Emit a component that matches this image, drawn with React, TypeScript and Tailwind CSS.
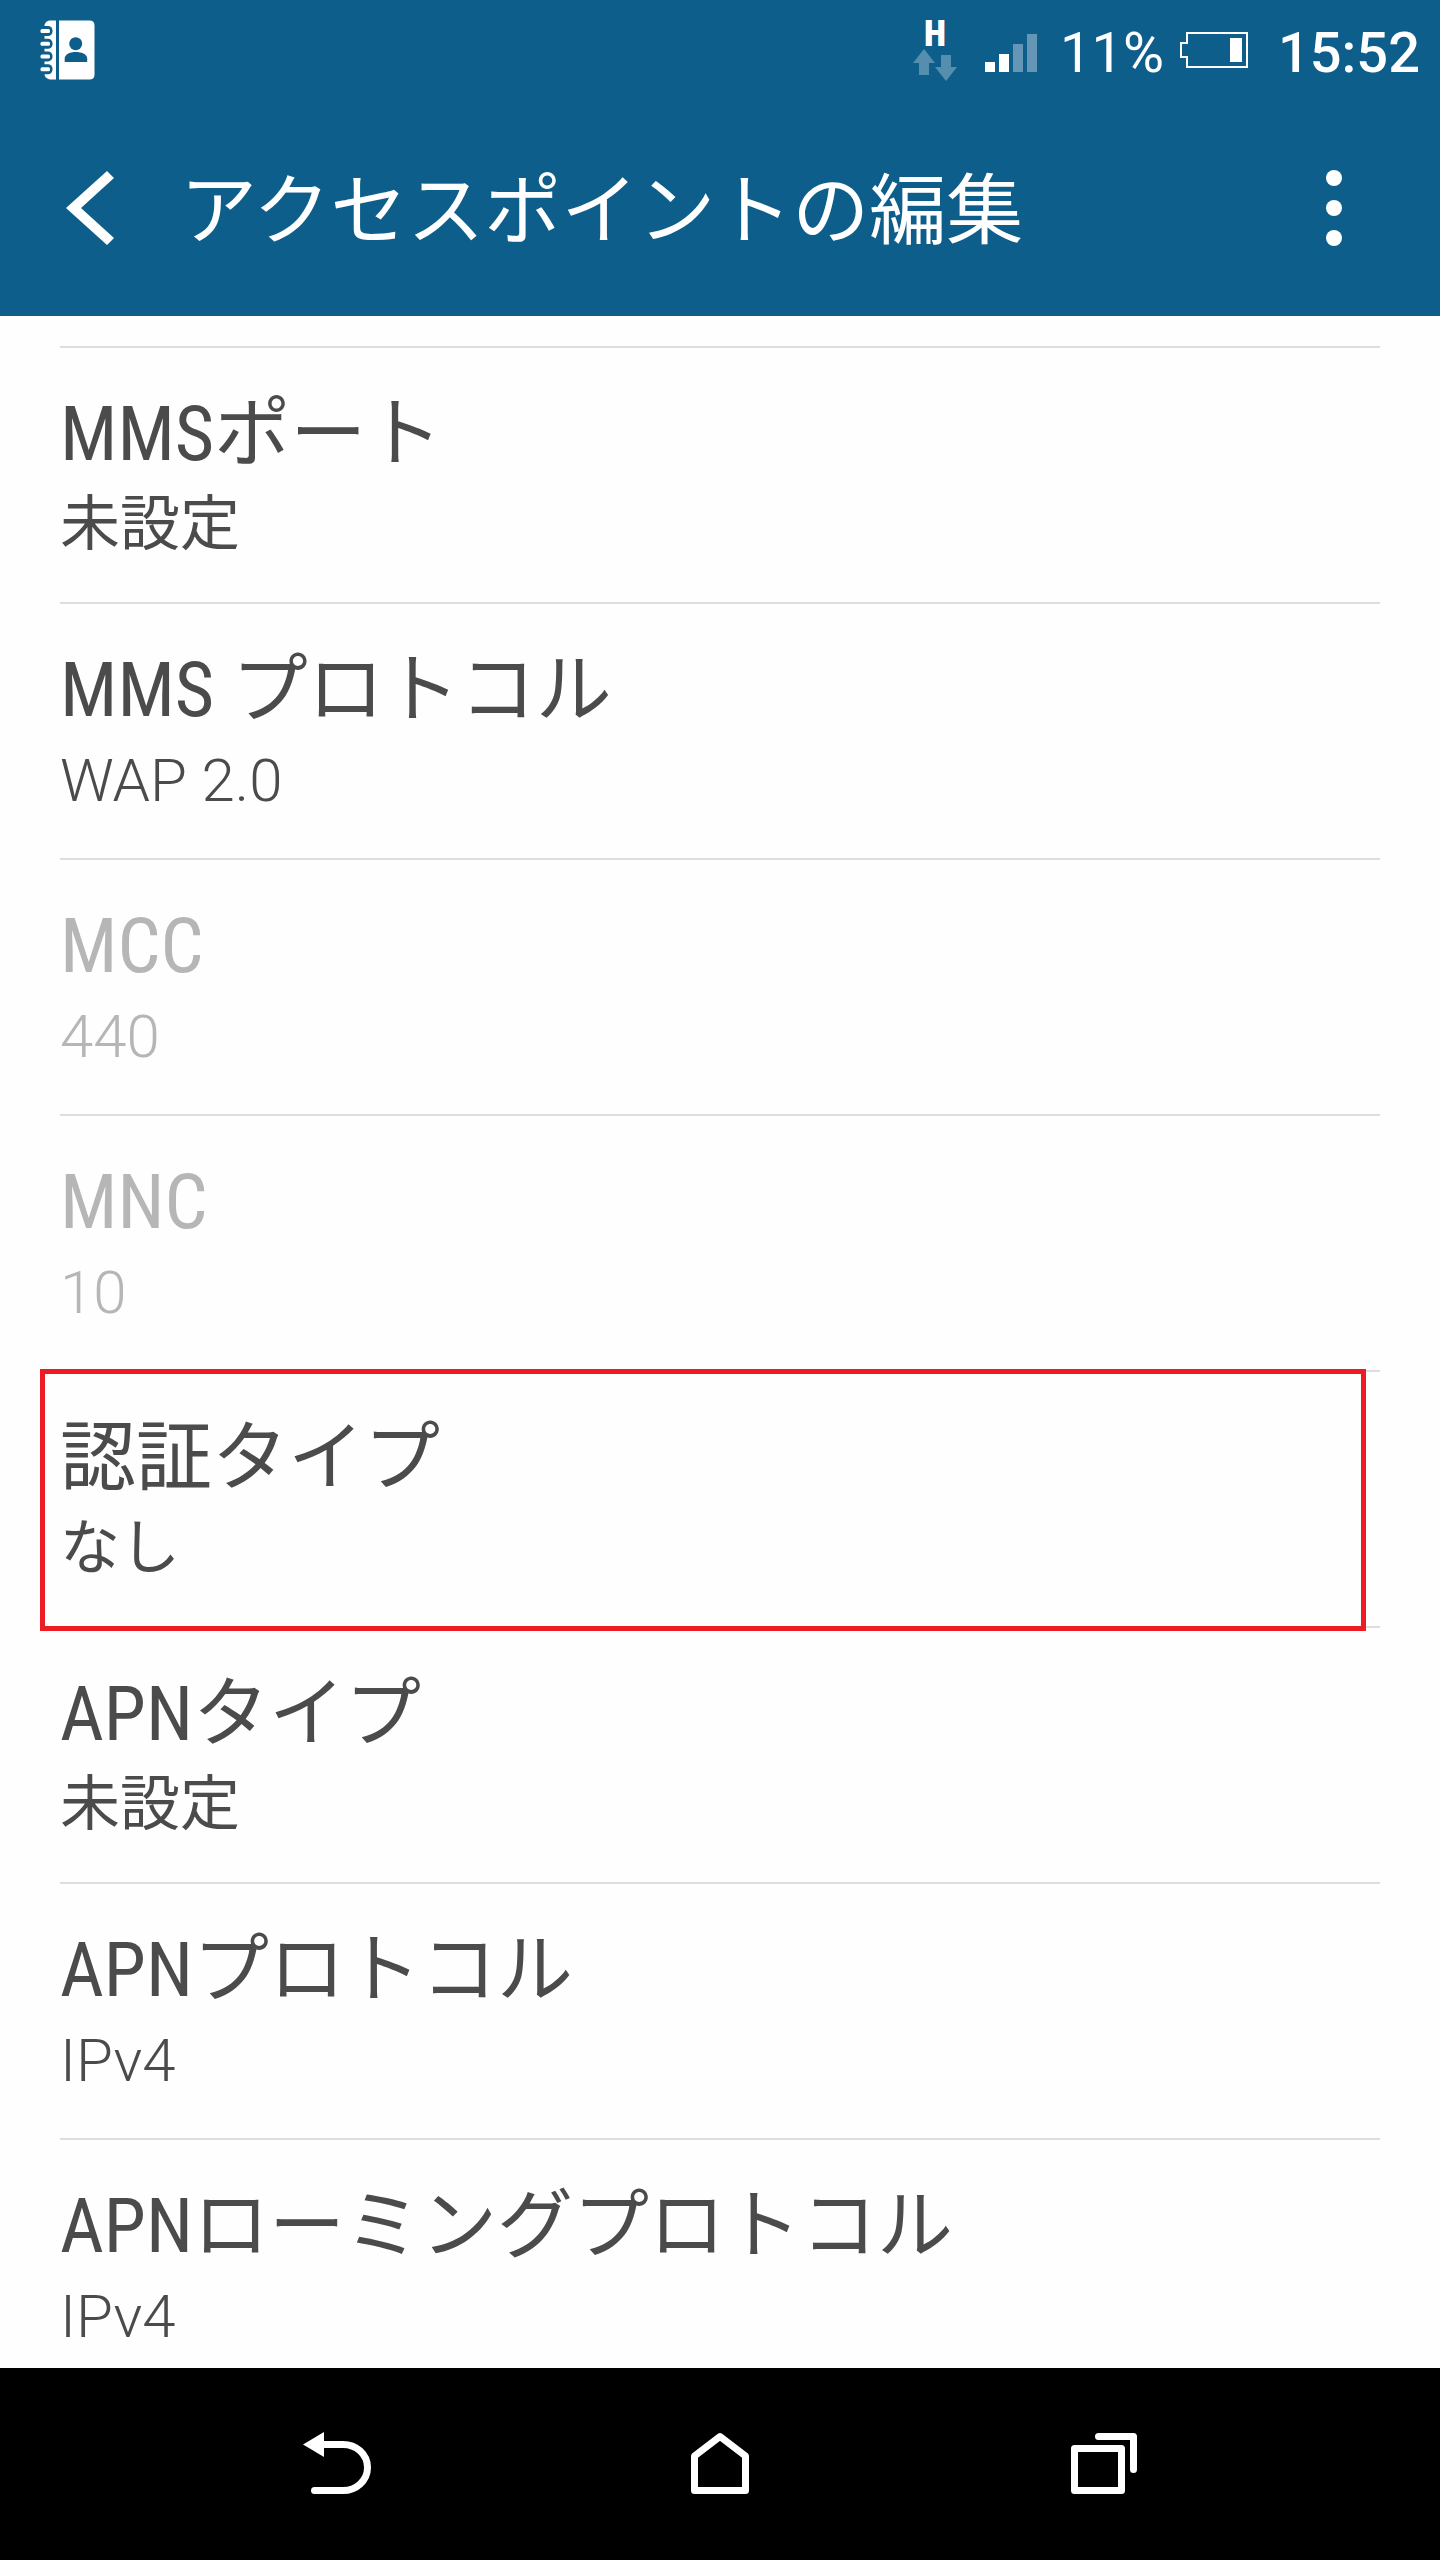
import { useState } from "react";

type Preference = {
  title: string;
  summary: string;
  disabled?: boolean;
  // CJK summaries use the regular weight, latin ones the light weight
  cjk?: boolean;
};

const PREFERENCES: Preference[] = [
  { title: "MMSポート", summary: "未設定", cjk: true },
  { title: "MMS プロトコル", summary: "WAP 2.0" },
  { title: "MCC", summary: "440", disabled: true },
  { title: "MNC", summary: "10", disabled: true },
  { title: "認証タイプ", summary: "なし", cjk: true },
  { title: "APNタイプ", summary: "未設定", cjk: true },
  { title: "APNプロトコル", summary: "IPv4" },
  { title: "APNローミングプロトコル", summary: "IPv4" },
];

export default function App() {
  const [selected, setSelected] = useState("認証タイプ");

  return (
    <div className="flex h-screen flex-col bg-[#fefefe] font-['Roboto','Noto_Sans_CJK_JP',sans-serif]">
      <header className="shrink-0 bg-[#0e5e8b] text-white">
        <StatusBar />
        <div className="flex h-[216px] items-center pr-[82px] pl-[66px]">
          <button type="button" aria-label="戻る" className="shrink-0">
            <BackIcon />
          </button>
          <h1 className="ml-[66px] flex-1 pt-2 text-[77px] leading-[92px]">
            アクセスポイントの編集
          </h1>
          <button
            type="button"
            aria-label="メニュー"
            className="flex w-12 shrink-0 flex-col items-center gap-[14px]"
          >
            <span className="size-4 rounded-full bg-white" />
            <span className="size-4 rounded-full bg-white" />
            <span className="size-4 rounded-full bg-white" />
          </button>
        </div>
      </header>

      <main className="min-h-0 flex-1 overflow-hidden px-[60px] pt-[30px]">
        <ul>
          {PREFERENCES.map((pref) => (
            <PreferenceRow
              key={pref.title}
              pref={pref}
              selected={pref.title === selected}
              onSelect={() => setSelected(pref.title)}
            />
          ))}
        </ul>
      </main>

      <NavBar />
    </div>
  );
}

function PreferenceRow({
  pref,
  selected,
  onSelect,
}: {
  pref: Preference;
  selected: boolean;
  onSelect: () => void;
}) {
  return (
    <li className="relative border-t-2 border-[#dedede]">
      <button
        type="button"
        disabled={pref.disabled}
        onClick={onSelect}
        className="block w-full pt-10 pb-8 text-left text-[#4b4b4b] disabled:text-[#b6b6b6]"
      >
        <span className="block font-['Roboto_Condensed','Roboto','Noto_Sans_CJK_JP',sans-serif] text-[76px] leading-[92px]">
          {pref.title}
        </span>
        <span
          className={
            pref.cjk
              ? "block text-[60px] leading-[90px]"
              : "block text-[60px] leading-[90px] font-light"
          }
        >
          {pref.summary}
        </span>
      </button>
      {selected && (
        <div className="pointer-events-none absolute -top-[3px] right-[14px] -bottom-[5px] -left-5 z-10 border-[5px] border-[#ed1c24]" />
      )}
    </li>
  );
}

function StatusBar() {
  return (
    <div className="flex h-[100px] items-center pr-5 pl-10">
      <ContactsIcon />
      <div className="ml-auto flex items-center">
        <NetworkIcon />
        <SignalIcon />
        <span className="ml-[23px] pt-[6px] text-[56px] leading-[64px]">11%</span>
        <BatteryIcon />
        <time className="ml-[30px] pt-[6px] text-[56px] leading-[64px] font-medium">
          15:52
        </time>
      </div>
    </div>
  );
}

function NavBar() {
  return (
    <nav className="flex h-48 shrink-0 bg-black px-[10%] text-white">
      <button type="button" aria-label="戻る" className="flex flex-1 items-center justify-center">
        <svg width="72" height="72" viewBox="0 0 72 72" fill="none" stroke="currentColor" strokeWidth="7" strokeLinecap="round">
          <path d="M22 16.5H43C56 16.5 67.5 26 67.5 39.5S56 62.5 43 62.5H14.5" />
          <path d="M3 16.5L24 4V29Z" fill="currentColor" stroke="none" />
        </svg>
      </button>
      <button type="button" aria-label="ホーム" className="flex flex-1 items-center justify-center">
        <svg width="72" height="72" viewBox="0 0 72 72" fill="none" stroke="currentColor" strokeWidth="7" strokeLinejoin="round">
          <path d="M10.5 28L36 8.5L61.5 28V62.5H10.5Z" />
        </svg>
      </button>
      <button type="button" aria-label="履歴" className="flex flex-1 items-center justify-center">
        <svg width="72" height="72" viewBox="0 0 72 72" fill="none" stroke="currentColor" strokeWidth="7" strokeLinecap="round" strokeLinejoin="round">
          <path d="M6.5 48.5V20.5H53.5V62.5H6.5Z" />
          <path d="M30.5 8.5H65.5V41.5" />
        </svg>
      </button>
    </nav>
  );
}

function BackIcon() {
  return (
    <svg width="48" height="74" viewBox="0 0 48 74" fill="currentColor">
      <path d="M41 0L48 7L15 37L48 67L41 74L0 37Z" />
    </svg>
  );
}

function ContactsIcon() {
  return (
    <svg width="56" height="60" viewBox="0 0 56 60">
      <path d="M9.5 0.5H16V59.5H9.5Q4.5 58 4.5 54V5Q5.5 1 9.5 0.5Z" fill="#fff" />
      <path d="M19 0.5H49.5Q54.5 0.5 54.5 5.5V54.5Q54.5 59.5 49.5 59.5H19Z" fill="#fff" />
      {/* ring holes and the rings running through them */}
      {[11, 23.7, 36.4, 49.2].map((y) => (
        <g key={y}>
          <rect x="-2" y={y - 5} width="14.5" height="10" rx="4.5" fill="#0e5e8b" />
          <rect x="0.5" y={y - 2} width="9.5" height="4" rx="1.5" fill="#fff" />
        </g>
      ))}
      <circle cx="35.7" cy="23.7" r="6.5" fill="#0e5e8b" />
      <path d="M24.7 42V38C25.5 34 30 32 35.8 32S46.500 34 47.2 38V42Z" fill="#0e5e8b" />
    </svg>
  );
}

function NetworkIcon() {
  return (
    <svg width="44" height="86" viewBox="0 0 44 86">
      <text
        x="22"
        y="39"
        textAnchor="middle"
        fill="#fff"
        className="font-['Roboto_Condensed','Roboto',sans-serif] text-[36px] font-black"
      >
        H
      </text>
      <path d="M11 42L22 56H16V68H6V56H0Z" fill="#568fae" />
      <path d="M28 48H38V60H44L33 74L22 60H28Z" fill="#568fae" />
    </svg>
  );
}

function SignalIcon() {
  return (
    <svg width="52" height="60" viewBox="0 0 52 60" className="ml-7">
      <path d="M0 42H10V52H0ZM14 34H24V52H14Z" fill="#fff" />
      <path d="M28 24H38V52H28ZM42 14H52V52H42Z" fill="#6596b5" />
    </svg>
  );
}

function BatteryIcon() {
  return (
    <svg width="68" height="36" viewBox="0 0 68 36" className="ml-4">
      <path d="M7 1H67V35H7V25H1V11H7Z" fill="none" stroke="#fff" strokeWidth="2" />
      <rect x="50" y="6" width="12" height="24" fill="#fff" />
    </svg>
  );
}
